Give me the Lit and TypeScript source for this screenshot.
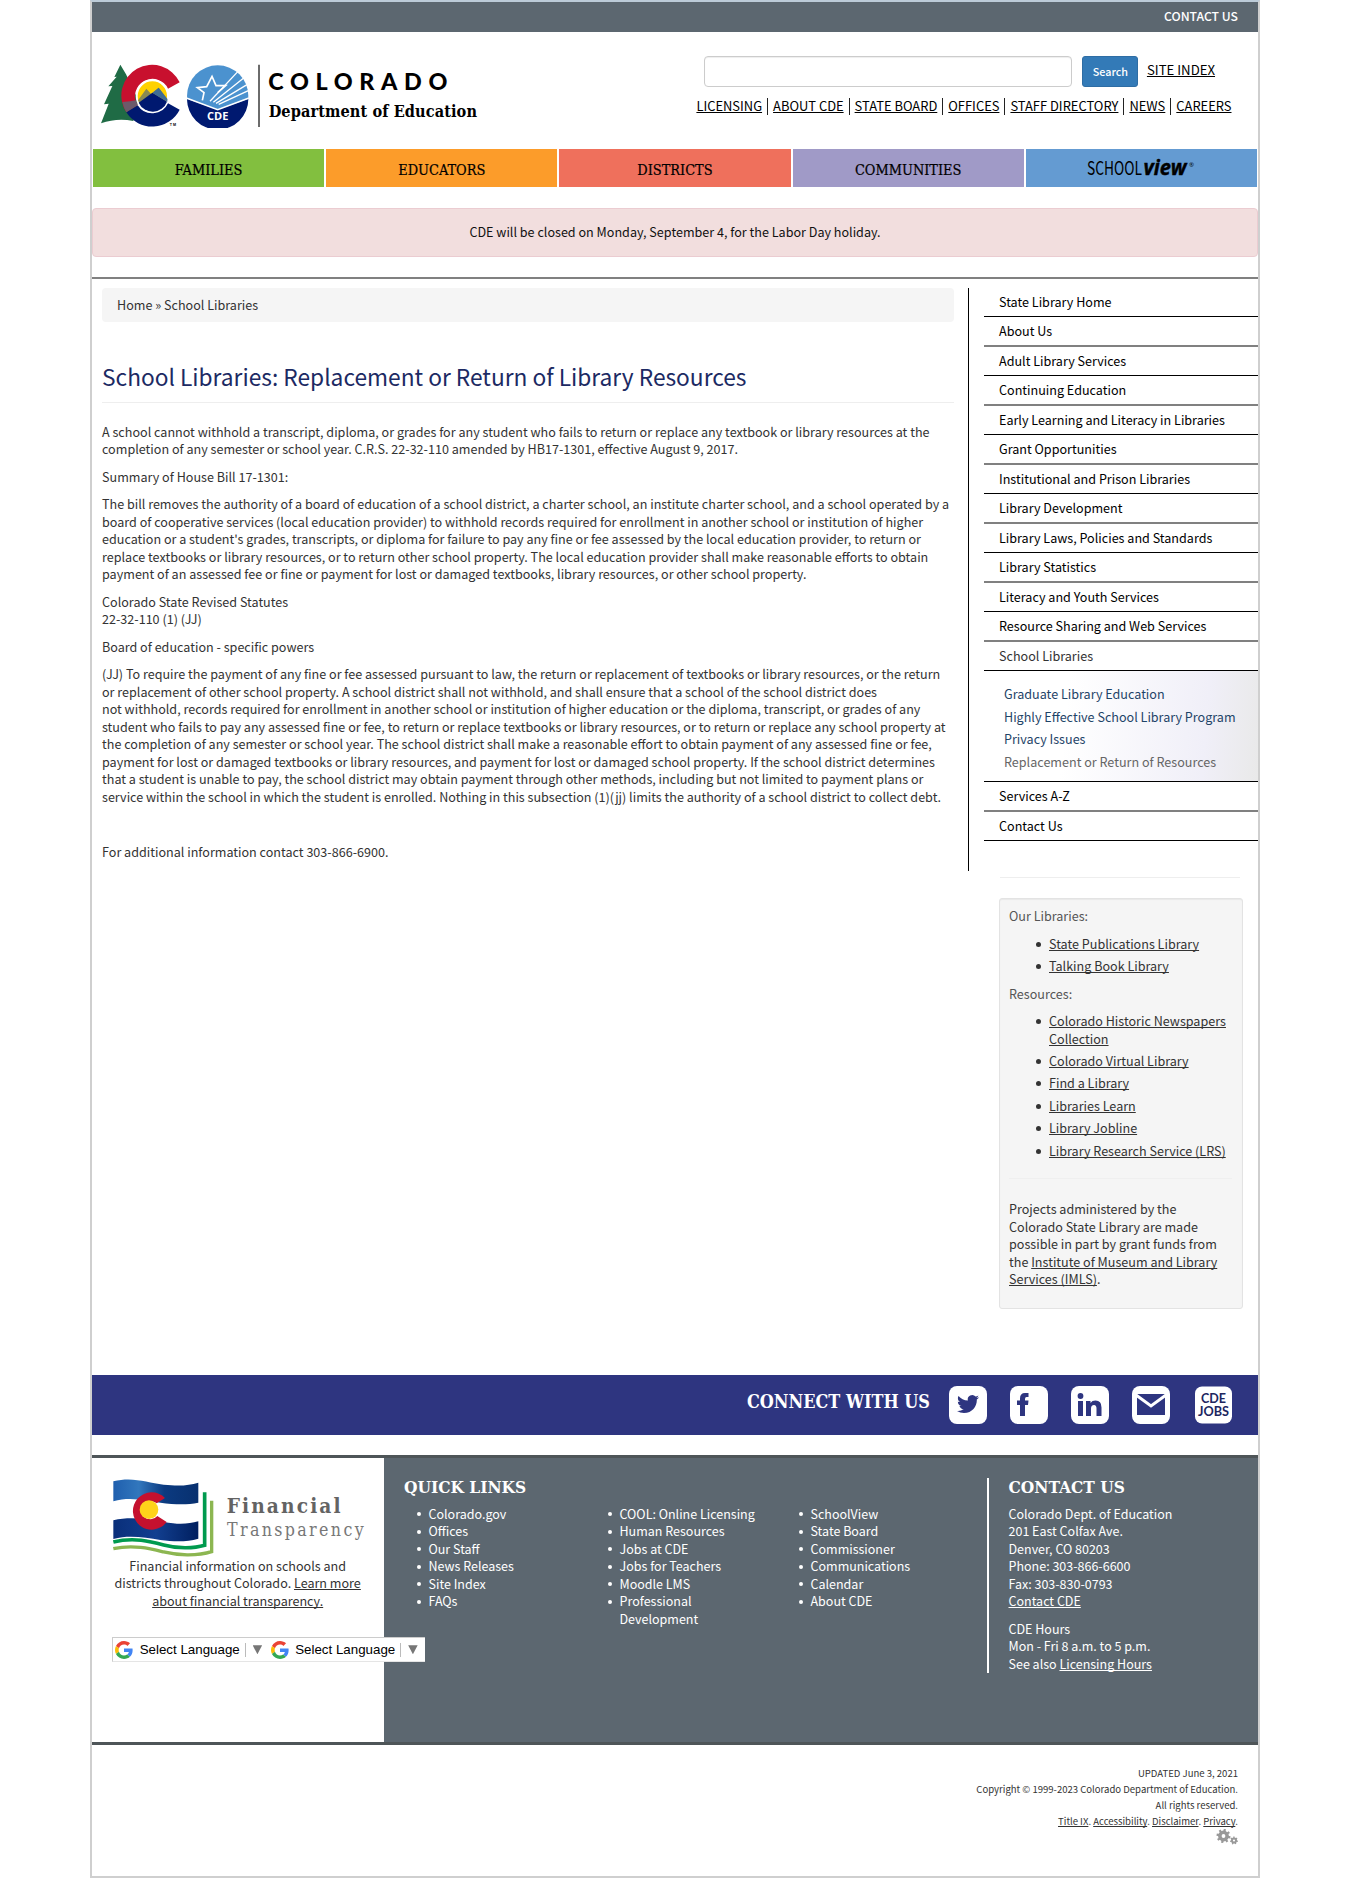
import { LitElement, html, css, svg } from "lit";

const NAV = [
  ["FAMILIES", "green"],
  ["EDUCATORS", "orange"],
  ["DISTRICTS", "coral"],
  ["COMMUNITIES", "violet"],
];
const TOP_LINKS = ["LICENSING", "ABOUT CDE", "STATE BOARD", "OFFICES", "STAFF DIRECTORY", "NEWS", "CAREERS"];
const SIDE = [
  "State Library Home", "About Us", "Adult Library Services", "Continuing Education",
  "Early Learning and Literacy in Libraries", "Grant Opportunities",
  "Institutional and Prison Libraries", "Library Development",
  "Library Laws, Policies and Standards", "Library Statistics",
  "Literacy and Youth Services", "Resource Sharing and Web Services",
];
const QUICK = [
  ["Colorado.gov", "Offices", "Our Staff", "News Releases", "Site Index", "FAQs"],
  ["COOL: Online Licensing", "Human Resources", "Jobs at CDE", "Jobs for Teachers", "Moodle LMS", "Professional Development"],
  ["SchoolView", "State Board", "Commissioner", "Communications", "Calendar", "About CDE"],
];

const logo = svg`
  <path d="M121 193L103 230L110 229L85 258L97 257L72 312L86 310L63 369Q110 352 160 362L175 300L138 222Z" fill="#1f6b45"/>
  <path d="M299 246A92 92 0 1 0 139 336L173 315A52 52 0 1 1 264 265Z" fill="#c8102e"/>
  <path d="M139 336A92 92 0 0 0 299 328L264 309A52 52 0 0 1 173 315Z" fill="#001970"/>
  <path d="M127 305Q132 325 139 336L173 315L168 300L150 303Z" fill="#6c5a6a"/>
  <circle cx="217" cy="287" r="47" fill="#ffd100" stroke="#fff" stroke-width="6"/>
  <path d="M174 300L199 265L214 282L236 262L262 296A46 46 0 0 1 174 300Z" fill="#8a8a52"/>
  <path d="M176 307L217 277L261 304A46 46 0 0 1 176 307Z" fill="#001970"/>
  <path d="M217 277L236 262L262 296V304Z" fill="#3f6d94"/>
  <text x="269" y="376" font-size="11" font-weight="700" font-family="Liberation Sans, sans-serif" textLength="19">TM</text>
  <circle cx="413" cy="287" r="92" fill="#4b92cf"/>
  <path d="M321 296L413 328L505 296A92 92 0 0 1 321 296Z" fill="#001970"/>
  <path d="M321 294L413 328L505 294" fill="none" stroke="#fff" stroke-width="5"/>
  <path d="M367 300L372 277L352 262L380 259L396 228L408 256L437 256L413 277" fill="none" stroke="#fff" stroke-width="5"/>
  <path d="M390 303L474 213M400 306L492 232M408 309L501 253M416 312L505 271" stroke="#fff" stroke-width="4"/>
  <text x="381" y="360" fill="#fff" font-size="33" font-weight="700" font-family="Open Sans, sans-serif" textLength="64" lengthAdjust="spacingAndGlyphs">CDE</text>
  <path d="M537 193V380" stroke="#222" stroke-width="4"/>
  <text x="565" y="268" font-size="70" font-weight="900" font-family="Lato, sans-serif" textLength="537">COLORADO</text>
  <text x="566" y="349" font-size="48.5" font-weight="700" font-family="DejaVu Serif Condensed, serif" textLength="625">Department of Education</text>`;

const flag = svg`
  <defs>
    <linearGradient id="b" x1="0" x2="1"><stop offset="0" stop-color="#1f5fae"/><stop offset=".3" stop-color="#3277bd"/><stop offset=".6" stop-color="#0b3a80"/><stop offset="1" stop-color="#08306f"/></linearGradient>
    <linearGradient id="d" x1="0" x2="1"><stop offset="0" stop-color="#0a2f7a"/><stop offset=".5" stop-color="#123f90"/><stop offset="1" stop-color="#001f5f"/></linearGradient>
  </defs>
  <path d="M99 123C160 108 200 128 250 133S325 135 354 127V187C320 194 285 193 240 187S150 168 99 183Z" fill="url(#b)"/>
  <path d="M99 240C150 228 200 236 250 245S325 250 354 243V295C320 305 285 305 240 299S150 283 99 296Z" fill="url(#d)"/>
  <path d="M99 305C160 290 210 303 250 314S340 325 373 315V156" fill="none" stroke="#009a4e" stroke-width="11"/>
  <path d="M99 325C160 312 210 325 250 335S350 348 394 334V181" fill="none" stroke="#8cb651" stroke-width="10"/>
  <path d="M254 173A56 56 0 1 0 259 245L231 227A28 28 0 1 1 229 189Z" fill="#c5112f"/>
  <circle cx="206" cy="208" r="28" fill="#ffd31a"/>
  <text x="439" y="218" fill="#636363" font-size="62" font-weight="700" font-family="DejaVu Serif Condensed, serif" textLength="342">Financial</text>
  <text x="440" y="287" fill="#777" font-size="53" font-family="DejaVu Serif Condensed, serif" textLength="410">Transparency</text>`;

const google = html`<svg class="g" viewBox="0 0 48 48">
  <path fill="#EA4335" d="M24 9.5c3.54 0 6.71 1.22 9.21 3.6l6.85-6.85C35.9 2.38 30.47 0 24 0 14.62 0 6.51 5.38 2.56 13.22l7.98 6.19C12.43 13.72 17.74 9.5 24 9.5z"/>
  <path fill="#4285F4" d="M46.98 24.55c0-1.57-.15-3.09-.38-4.55H24v9.02h12.94c-.58 2.96-2.26 5.48-4.78 7.18l7.73 6c4.51-4.18 7.09-10.36 7.09-17.65z"/>
  <path fill="#FBBC05" d="M10.53 28.59c-.48-1.45-.76-2.99-.76-4.59s.27-3.14.76-4.59l-7.98-6.19C.92 16.46 0 20.12 0 24c0 3.88.92 7.54 2.56 10.78l7.97-6.19z"/>
  <path fill="#34A853" d="M24 48c6.48 0 11.93-2.13 15.89-5.81l-7.73-6c-2.15 1.45-4.92 2.3-8.16 2.3-6.26 0-11.57-4.22-13.47-9.91l-7.98 6.19C6.51 42.62 14.62 48 24 48z"/>
</svg>`;

const gear = (cx: number, cy: number, r: number, n: number, color: string) => svg`
  <g fill="none" stroke=${color}>
    <circle cx=${cx} cy=${cy} r=${r * 0.52} stroke-width=${r * 0.5}/>
    ${Array.from({ length: n }, (_, i) => {
      const a = (i * 2 * Math.PI) / n + 0.2;
      return svg`<path stroke-width=${r * 0.32} d=${`M${cx + Math.cos(a) * r * 0.6} ${cy + Math.sin(a) * r * 0.6}L${cx + Math.cos(a) * r} ${cy + Math.sin(a) * r}`}/>`;
    })}
  </g>`;

class AppRoot extends LitElement {
  static styles = css`
    :host { display: block; background: #fff; }
    * { box-sizing: border-box; }
    a { color: inherit; text-decoration: underline; text-underline-offset: 1px; text-decoration-thickness: 1px; text-decoration-skip-ink: none; }
    ul, p, h1, h2 { margin: 0; padding: 0; list-style: none; font-weight: 400; }
    svg { display: block; }
    .frame {
      width: 1170px; height: 1878px; margin: 0 auto; border: 2px solid #cfcfcf; border-top-color: #bccbd8;
      font: 12.58px/17.5px "Noto Sans CJK SC", sans-serif; color: #333; display: flex; flex-direction: column;
    }
    .topbar { height: 30px; background: #5c6770; color: #fff; font-weight: 500; font-size: 12.2px; text-align: right; padding: 6px 20px 0 0; }
    .header { height: 117px; display: flex; justify-content: space-between; color: #000; }
    .logo { width: 380px; height: 66.67px; margin: 29.67px 0 0 8px; }
    .tools { padding: 24px 26.5px 0 0; display: flex; flex-direction: column; }
    .search { display: flex; align-items: center; padding-left: 8px; height: 31px; }
    .input { width: 368px; height: 31px; border: 1px solid #ccc; border-radius: 4px; box-shadow: inset 0 1px 1px rgba(0,0,0,.07); }
    .btn { width: 56px; height: 31px; margin: 0 8.5px 0 10px; background: #337ab7; border: 1px solid #2e6da4; border-radius: 3px; color: #fff; font: 500 10.8px/28px "Noto Sans CJK SC", sans-serif; text-align: center; }
    .site { font-size: 13.2px; line-height: 28px; height: 31px; }
    .links { display: flex; justify-content: flex-end; font-size: 12.91px; line-height: 18px; margin-top: 10px; }
    .links i { width: 1px; height: 17px; background: #222; margin: 1px 5px 0 5px; }
    .nav { height: 38px; display: grid; grid-template-columns: repeat(5, 1fr); grid-template-rows: 38px; gap: 2px; padding: 0 1px; flex: none; }
    .nav div { font: 14.4px/43px "DejaVu Serif Condensed", serif; color: #000; text-align: center; -webkit-text-stroke: .2px #000; }
    .green { background: #82bf3f; } .orange { background: #fc9c2a; } .coral { background: #ef705c; }
    .violet { background: #a09ac7; } .nav .blue { background: #649bd2; display: flex; justify-content: center; -webkit-text-stroke: 0; }
    .alert { height: 49px; margin-top: 21px; background: #f2dede; border: 1px solid #ebccd1; border-radius: 4px; color: #111; text-align: center; line-height: 46px; }
    .rule { height: 2px; background: #808080; margin-top: 20px; }
    .main { height: 1096px; padding-top: 9px; display: flex; }
    .content { width: 877px; height: 583px; border-right: 1px solid #000; padding: 0 14px 0 10px; white-space: nowrap; }
    .crumb { height: 34px; background: #f5f5f5; border-radius: 4px; padding: 7.5px 15px; }
    h1 { font-size: 22.72px; line-height: 30px; color: #1c2a63; margin-top: 40px; height: 41px; border-bottom: 1px solid #eee; }
    .text { padding-top: 19.6px; }
    .text p { margin-bottom: 10px; }
    .side { width: 274px; margin-left: 15px; }
    .menu li { height: 29px; border-bottom: 1px solid #000; padding: 5px 0 0 15px; color: #000; white-space: nowrap; }
    .menu li.even { height: 30px; border-bottom: 2px solid #808080; padding-top: 4.5px; }
    .menu li.cur { color: #333; }
    .menu li.sub { height: 111px; padding: 12px 0 0 20px; line-height: 22.5px; color: #1f4468; background: linear-gradient(95deg, #fff 30%, #f0eff8 80%, #e9e9e9); }
    .menu .here { color: #666; }
    .hr { height: 1px; background: #eee; margin: 36px 18px 20px 16px; }
    .well { width: 244px; height: 411px; margin-left: 15px; border: 1px solid #e3e3e3; border-radius: 3px; background: #f5f5f5; box-shadow: inset 0 1px 1px rgba(0,0,0,.05); padding: 8px 0 0 9px; white-space: nowrap; }
    .well .cap { color: #555; }
    .well ul { padding-left: 40px; margin: 10.2px 0 10px; }
    .well li { margin-bottom: 5px; line-height: 17.4px; }
    li.dot::before { content: ""; display: inline-block; width: 5px; height: 5px; border-radius: 50%; background: currentColor; margin: 0 8px 2px -13px; vertical-align: middle; }
    .well .line { height: 1px; background: #efefef; width: 223px; margin: 19px 0 21.3px; }
    .connect { height: 60px; background: #2e3580; display: flex; padding: 11px 22px 0 0; justify-content: flex-end; }
    .connect h2 { font: 700 17.9px/32px "DejaVu Serif Condensed", serif; color: #fff; margin-right: 19px; }
    .icons { width: 287px; height: 38px; }
    .footer { height: 290px; margin-top: 20px; border: solid #4e5558; border-width: 3px 0; background: #5c6770; display: flex; color: #fff; }
    .fin { width: 292px; background: #fff; color: #333; padding: 18.67px 0 0 19.67px; }
    .flag { width: 258.3px; height: 81.67px; }
    .fin p { width: 252px; text-align: center; white-space: nowrap; margin-top: -1.5px; }
    .translate { position: relative; z-index: 1; width: 313px; height: 25px; margin-top: 28px; background: #fff; border: 1px solid #ccc; border-right: 0; border-bottom-color: #e5e5e5; display: flex; align-items: center; font: 13.33px "Liberation Sans", sans-serif; color: #000; white-space: nowrap; }
    .translate span { width: 100px; flex: none; }
    .g { width: 18px; height: 18px; margin: 0 6.5px 0 2.5px; flex: none; }
    .translate i { width: 1px; height: 14px; background: #bbb; margin: 0 7px 0 5px; flex: none; }
    .tri { width: 9.5px; height: 9px; background: #767676; clip-path: polygon(0 0, 100% 0, 50% 100%); margin-right: 6px; flex: none; }
    .quick, .contact { font-weight: 500; font-size: 12.5px; }
    .quick { width: 603px; padding: 19px 0 0 20px; }
    .footer h2 { font: 700 17.2px/20px "DejaVu Serif Condensed", serif; white-space: nowrap; }
    .cols { display: grid; grid-template-columns: 191px 191px 180px; padding: 7.5px 0 0 24.5px; }
    .cols ul { width: 150px; }
    .cols li { white-space: nowrap; }
    .cols li.dot::before { width: 4px; height: 4px; margin: 0 8px 2px -12px; }
    .contact { border-left: 2px solid #fff; height: 195px; margin-top: 20px; padding-left: 19.5px; white-space: nowrap; }
    .contact h2 { margin-top: -1px; }
    .contact p { margin: 7.5px 0 10px; }
    .contact p + p { margin-top: 0; }
    .legal { text-align: right; font-size: 9.56px; line-height: 16px; padding: 20px 20px 0 0; }
    .gears { width: 22px; height: 16px; margin: 0 0 0 auto; }
  `;

  render() {
    return html`<div class="frame">
      <div class="topbar">CONTACT US</div>
      <div class="header">
        <svg class="logo" viewBox="60 185 1140 200">${logo}</svg>
        <div class="tools">
          <div class="search"><div class="input"></div><div class="btn">Search</div><a class="site">SITE INDEX</a></div>
          <div class="links">${TOP_LINKS.map((l, i) => html`${i ? html`<i></i>` : ""}<a>${l}</a>`)}</div>
        </div>
      </div>
      <div class="nav">
        ${NAV.map(([l, c]) => html`<div class=${c}>${l}</div>`)}
        <div class="blue"><svg width="110" height="38" viewBox="0 0 110 38" font-family="Open Sans, sans-serif">
          <text x="1" y="25.500" font-size="18.500" font-family="Noto Sans CJK SC, sans-serif" textLength="55" lengthAdjust="spacingAndGlyphs">SCHOOL</text>
          <text x="57.500" y="25.500" font-size="21" font-weight="700" font-style="italic" stroke="#000" stroke-width=".4" textLength="43" lengthAdjust="spacingAndGlyphs">view</text>
          <text x="103" y="18" font-size="6">®</text></svg></div>
      </div>
      <div class="alert">CDE will be closed on Monday, September 4, for the Labor Day holiday.</div>
      <div class="rule"></div>
      <div class="main">
        <div class="content">
          <div class="crumb">Home » School Libraries</div>
          <h1>School Libraries: Replacement or Return of Library Resources</h1>
          <div class="text">
            <p>A school cannot withhold a transcript, diploma, or grades for any student who fails to return or replace any textbook or library resources at the<br>completion of any semester or school year. C.R.S. 22-32-110 amended by HB17-1301, effective August 9, 2017.</p>
            <p>Summary of House Bill 17-1301:</p>
            <p>The bill removes the authority of a board of education of a school district, a charter school, an institute charter school, and a school operated by a<br>board of cooperative services (local education provider) to withhold records required for enrollment in another school or institution of higher<br>education or a student's grades, transcripts, or diploma for failure to pay any fine or fee assessed by the local education provider, to return or<br>replace textbooks or library resources, or to return other school property. The local education provider shall make reasonable efforts to obtain<br>payment of an assessed fee or fine or payment for lost or damaged textbooks, library resources, or other school property.</p>
            <p>Colorado State Revised Statutes<br>22-32-110 (1) (JJ)</p>
            <p>Board of education - specific powers</p>
            <p>(JJ) To require the payment of any fine or fee assessed pursuant to law, the return or replacement of textbooks or library resources, or the return<br>or replacement of other school property. A school district shall not withhold, and shall ensure that a school of the school district does<br>not withhold, records required for enrollment in another school or institution of higher education or the diploma, transcript, or grades of any<br>student who fails to pay any assessed fine or fee, to return or replace textbooks or library resources, or to return or replace any school property at<br>the completion of any semester or school year. The school district shall make a reasonable effort to obtain payment of any assessed fine or fee,<br>payment for lost or damaged textbooks or library resources, and payment for lost or damaged school property. If the school district determines<br>that a student is unable to pay, the school district may obtain payment through other methods, including but not limited to payment plans or<br>service within the school in which the student is enrolled. Nothing in this subsection (1)(jj) limits the authority of a school district to collect debt.</p>
            <p>&nbsp;</p>
            <p>For additional information contact 303-866-6900.</p>
          </div>
        </div>
        <div class="side">
          <ul class="menu">
            ${SIDE.map((s, i) => html`<li class=${i % 2 ? "even" : "odd"}>${s}</li>`)}
            <li class="cur">School Libraries</li>
            <li class="sub">Graduate Library Education<br>Highly Effective School Library Program<br>Privacy Issues<br><span class="here">Replacement or Return of Resources</span></li>
            <li class="even">Services A-Z</li>
            <li>Contact Us</li>
          </ul>
          <div class="hr"></div>
          <div class="well">
            <p class="cap">Our Libraries:</p>
            <ul>${["State Publications Library", "Talking Book Library"].map((t) => html`<li class="dot"><a>${t}</a></li>`)}</ul>
            <p class="cap">Resources:</p>
            <ul>
              <li class="dot"><a>Colorado Historic Newspapers<br>Collection</a></li>
              ${["Colorado Virtual Library", "Find a Library", "Libraries Learn", "Library Jobline", "Library Research Service (LRS)"].map((t) => html`<li class="dot"><a>${t}</a></li>`)}
            </ul>
            <div class="line"></div>
            <p>Projects administered by the<br>Colorado State Library are made<br>possible in part by grant funds from<br>the <a>Institute of Museum and Library<br>Services (IMLS)</a>.</p>
          </div>
        </div>
      </div>
      <div class="connect">
        <h2>CONNECT WITH US</h2>
        <svg class="icons" viewBox="0 0 287 38">
          <g fill="#fff"><rect width="38" height="38" rx="8"/><rect x="61" width="38" height="38" rx="8"/><rect x="122" width="38" height="38" rx="8"/><rect x="183" width="38" height="38" rx="8"/><rect x="246" y=".5" width="37" height="37" rx="7"/></g>
          <g fill="#2e3580">
            <path transform="translate(8 7) scale(.92)" d="M23.953 4.57a10 10 0 01-2.825.775 4.958 4.958 0 002.163-2.723c-.951.555-2.005.959-3.127 1.184a4.92 4.92 0 00-8.384 4.482C7.69 8.095 4.067 6.13 1.64 3.162a4.822 4.822 0 00-.666 2.475c0 1.71.87 3.213 2.188 4.096a4.904 4.904 0 01-2.228-.616v.06a4.923 4.923 0 003.946 4.827 4.996 4.996 0 01-2.212.085 4.936 4.936 0 004.604 3.417 9.867 9.867 0 01-6.102 2.105c-.39 0-.779-.023-1.17-.067a13.995 13.995 0 007.557 2.209c9.053 0 13.998-7.496 13.998-13.985 0-.21 0-.42-.015-.63A9.935 9.935 0 0024 4.59z"/>
            <path d="M71 30V19H68V14.500H71V12.500Q71 7 76 7H79.500V11H77.500Q76 11 76 13V14.500H79.500L79 19H76V30Z"/>
            <circle cx="131.500" cy="10" r="2.900"/><path d="M129 15H134V30H129ZM137 15H141.500V17Q143 14.600 146.500 14.600Q152.500 14.600 152.500 21.500V30H147.500V22.500Q147.500 19 145 19Q142 19 142 22.500V30H137Z"/>
            <rect x="188" y="8" width="28" height="21"/>
            <path d="M187 9L202 20L217 9" fill="none" stroke="#fff" stroke-width="3"/>
            <g fill="#20265f" font-size="12.500" font-weight="700" text-anchor="middle" font-family="Lato, sans-serif"><text x="264.500" y="17" textLength="25" lengthAdjust="spacingAndGlyphs">CDE</text><text x="264.500" y="30" textLength="31" lengthAdjust="spacingAndGlyphs">JOBS</text></g>
          </g>
        </svg>
      </div>
      <div class="footer">
        <div class="fin">
          <svg class="flag" viewBox="95 110 775 245">${flag}</svg>
          <p>Financial information on schools and<br>districts throughout Colorado. <a>Learn more<br>about financial transparency.</a></p>
          <div class="translate">${[0, 1].map(() => html`${google}<span>Select Language</span><i></i><b class="tri"></b>`)}</div>
        </div>
        <div class="quick">
          <h2>QUICK LINKS</h2>
          <div class="cols">${QUICK.map((c) => html`<ul>${c.map((t) => html`<li class="dot">${t === "Professional Development" ? html`Professional<br>Development` : t}</li>`)}</ul>`)}</div>
        </div>
        <div class="contact">
          <h2>CONTACT US</h2>
          <p>Colorado Dept. of Education<br>201 East Colfax Ave.<br>Denver, CO 80203<br>Phone: 303-866-6600<br>Fax: 303-830-0793<br><a>Contact CDE</a></p>
          <p>CDE Hours<br>Mon - Fri 8 a.m. to 5 p.m.<br>See also <a>Licensing Hours</a></p>
        </div>
      </div>
      <div class="legal">
        UPDATED June 3, 2021<br>Copyright © 1999-2023 Colorado Department of Education.<br>All rights reserved.<br><a>Title IX</a>. <a>Accessibility</a>. <a>Disclaimer</a>. <a>Privacy</a>.
        <svg class="gears" viewBox="0 0 22 16">${gear(7.5, 7, 7, 8, "#999")}${gear(18, 11.5, 4, 7, "#999")}</svg>
      </div>
    </div>`;
  }
}
customElements.define("app-root", AppRoot);
